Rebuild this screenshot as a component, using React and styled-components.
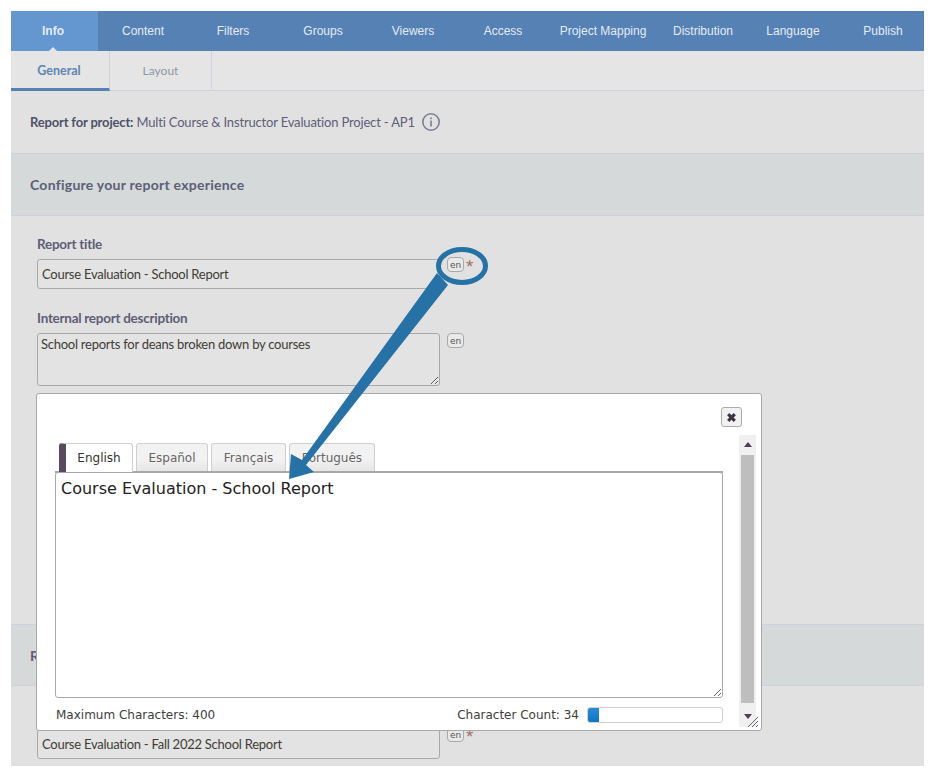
import styled, { createGlobalStyle } from 'styled-components';

const navItems = [
   { label: 'Info', width: 87 },
   { label: 'Content', width: 90 },
   { label: 'Filters', width: 90 },
   { label: 'Groups', width: 90 },
   { label: 'Viewers', width: 90 },
   { label: 'Access', width: 90 },
   { label: 'Project Mapping', width: 110 },
   { label: 'Distribution', width: 90 },
   { label: 'Language', width: 90 },
   { label: 'Publish', width: 90 },
];
const languages = [
   { id: 'en', label: 'English', width: 74 },
   { id: 'es', label: 'Español', width: 72 },
   { id: 'fr', label: 'Français', width: 75 },
   { id: 'pt', label: 'Português', width: 86 },
];

const GlobalStyle = createGlobalStyle`
   * {
      box-sizing: border-box;
   }
   body {
      margin: 0;
      background: #fff;
      font-family: 'Lato', 'Liberation Sans', sans-serif;
   }
`;

const Page = styled.div`
   position: relative;
   width: 913px;
   height: 755px;
   margin: 11px 0 0 11px;
   background: #e1e1e1;
   overflow: hidden;
`;

const NavBar = styled.nav`
   display: flex;
   height: 40px;
   background: #5681b4;
`;

const NavItem = styled.div`
   position: relative;
   flex: 0 0 ${(props) => props.$width}px;
   padding-right: ${(props) => (props.$active ? '3px' : '0')};
   display: flex;
   align-items: center;
   justify-content: center;
   background: ${(props) => (props.$active ? '#6496d0' : 'transparent')};
   color: #e3ebf4;
   font-family: 'Liberation Sans', Arial, sans-serif;
   font-size: 12px;
   font-weight: ${(props) => (props.$active ? 700 : 400)};

   &::after {
      content: '';
      display: ${(props) => (props.$active ? 'block' : 'none')};
      position: absolute;
      left: 38px;
      bottom: 0;
      border: 4px solid transparent;
      border-top: 0;
      border-bottom-color: #e5e5e5;
   }
`;

const SubTabs = styled.div`
   display: flex;
   height: 40px;
   background: #e5e5e5;
   border-bottom: 1px solid #cdd2de;
`;

const SubTab = styled.div`
   width: ${(props) => props.$width}px;
   display: flex;
   align-items: center;
   justify-content: center;
   border-right: 1px solid #cdd2de;
   border-bottom: 3px solid ${(props) => (props.$active ? '#5681b4' : 'transparent')};
   margin-bottom: -1px;
   padding: 2px ${(props) => (props.$active ? '2px' : '0')} 0 0;
   color: ${(props) => (props.$active ? '#5d84b2' : '#8f97a5')};
   font-size: ${(props) => (props.$active ? '12.5px' : '12px')};
   font-weight: ${(props) => (props.$active ? 700 : 400)};
`;

const ProjectRow = styled.div`
   height: 62px;
   padding: 0 19px;
   display: flex;
   align-items: center;
   gap: 6px;
   font-size: 13px;
   letter-spacing: -0.17px;
   color: #5e5d77;

   strong {
      color: #4d5268;
      font-weight: 700;
   }
`;

const InfoIcon = styled.svg`
   width: 20px;
   height: 20px;
   flex: none;
`;

const SectionBar = styled.div`
   height: ${(props) => props.$height}px;
   padding: 0 19px;
   display: flex;
   align-items: center;
   background: #d5d9da;
   border-top: 1px solid #ccd1da;
   border-bottom: 1px solid #ccd1da;
   color: #5a5f77;
   font-size: 14px;
   font-weight: 700;
   letter-spacing: 0.25px;
`;

const FormArea = styled.div`
   padding: ${(props) => props.$top}px 26px 0;
   height: ${(props) => props.$height}px;
`;

const FieldLabel = styled.label`
   display: block;
   margin-bottom: 7px;
   color: #5e5d77;
   font-size: 13.5px;
   line-height: 16px;
   font-weight: 700;
   letter-spacing: -0.27px;
`;

const Field = styled.div`
   display: flex;
   align-items: flex-start;
   gap: 7px;
   margin-bottom: ${(props) => props.$gap || 0}px;
`;

const TextInput = styled.input`
   width: 403px;
   height: 30px;
   padding: 0 4px;
   border: 1px solid #a9a9a9;
   border-radius: 3px;
   background: #e3e3e3;
   color: #403c35;
   font-family: 'Lato', sans-serif;
   font-size: 13px;
   letter-spacing: -0.25px;
   outline: none;
`;

const TextArea = styled.textarea`
   display: block;
   width: 403px;
   height: 53px;
   padding: 2px 3px;
   border: 1px solid #a9a9a9;
   border-radius: 3px;
   background: #e3e3e3;
   color: #403c35;
   font-family: 'Lato', sans-serif;
   font-size: 13px;
   line-height: 16px;
   letter-spacing: -0.25px;
   outline: none;
`;

const LangBadge = styled.span`
   margin-top: ${(props) => (props.$raised ? '-2px' : '0')};
   width: 17px;
   height: 15px;
   display: flex;
   align-items: center;
   justify-content: center;
   border: 1px solid #a9a9a9;
   border-radius: 4px;
   background: #e9e9e9;
   color: #555;
   font-family: 'DejaVu Sans', sans-serif;
   font-size: 9px;
`;

const Required = styled.span`
   margin: -2px 0 0 -5px;
   color: #a3705f;
   font-family: 'Liberation Sans', sans-serif;
   font-size: 19px;
   line-height: 20px;
`;

const Modal = styled.div`
   position: absolute;
   left: 25px;
   top: 382px;
   width: 726px;
   height: 338px;
   display: flex;
   background: #fff;
   border: 1px solid #a9a9a9;
   border-radius: 3px;
   font-family: 'DejaVu Sans', Verdana, sans-serif;
`;

const ModalMain = styled.div`
   flex: 0 0 702px;
   padding: 13px 0 0 18px;
   display: flex;
   flex-direction: column;
`;

const CloseRow = styled.div`
   display: flex;
   justify-content: flex-end;
   height: 36px;
   margin-right: -3px;
`;

const CloseButton = styled.button`
   width: 21px;
   height: 20px;
   padding: 0;
   display: flex;
   align-items: center;
   justify-content: center;
   background: #f1f1f1;
   border: 1px solid #ababab;
   border-radius: 3px;
`;

const LangTabs = styled.div`
   display: flex;
   gap: 3px;
   height: 30px;
   padding-left: 4px;
   border-bottom: 2px solid #a9a9a9;
   width: 668px;
`;

const LangTab = styled.div`
   width: ${(props) => props.$width}px;
   height: ${(props) => (props.$active ? '30px' : '28px')};
   display: flex;
   align-items: center;
   justify-content: center;
   padding-bottom: ${(props) => (props.$active ? '2px' : '0')};
   border: 1px solid #cfcfcf;
   border-bottom: 0;
   border-left: ${(props) => (props.$active ? '7px solid #574b5d' : '1px solid #cfcfcf')};
   border-radius: 3px 3px 0 0;
   background: ${(props) => (props.$active ? '#fff' : 'linear-gradient(#f2f2f2, #f2f2f2 55%, #e6e6e6)')};
   color: ${(props) => (props.$active ? '#333' : '#666')};
   font-size: 12px;
`;

const EditorArea = styled.textarea`
   display: block;
   width: 668px;
   height: 226px;
   margin-top: -1px;
   padding: 6px 5px;
   border: 1px solid #a9a9a9;
   border-radius: 3px;
   background: #fff;
   color: #222;
   font-family: 'DejaVu Sans', Verdana, sans-serif;
   font-size: 16px;
   outline: none;
`;

const ModalFooter = styled.div`
   width: 668px;
   margin-top: 9px;
   padding-left: 1px;
   display: flex;
   align-items: center;
   justify-content: space-between;
   color: #3d3d3d;
   font-size: 12px;
`;

const CountGroup = styled.div`
   display: flex;
   align-items: center;
   gap: 8px;
`;

const Progress = styled.div`
   width: 136px;
   height: 16px;
   border: 1px solid #d0d0d0;
   border-radius: 3px;
   overflow: hidden;
   background: #fff;
`;

const ProgressFill = styled.div`
   height: 100%;
   background: linear-gradient(#2a8cd8, #0f74c4);
`;

const ScrollRail = styled.div`
   flex: 0 0 17px;
   margin: 41px 0 3px;
   display: flex;
   flex-direction: column;
   background: #f0f0f0;
`;

const ScrollArrow = styled.div`
   flex: 0 0 ${(props) => (props.$up ? '18px' : '24px')};
   padding-top: ${(props) => (props.$up ? '0' : '3px')};
   margin-bottom: ${(props) => (props.$up ? '2px' : '0')};
   display: flex;
   align-items: center;
   justify-content: center;

   &::before {
      content: '';
      border: 4px solid transparent;
      ${(props) => (props.$up ? 'border-top: 0; border-bottom: 5px solid #4a4050;' : 'border-bottom: 0; border-top: 5px solid #4a4050;')}
   }
`;

const ScrollThumb = styled.div`
   flex: 1;
   margin: 0 2px;
   background: #bebebe;
`;

const ResizeGrip = styled.svg`
   position: absolute;
   right: 3px;
   bottom: 3px;
   width: 11px;
   height: 11px;
`;

const Annotation = styled.svg`
   position: absolute;
   left: -11px;
   top: -11px;
   width: 936px;
   height: 778px;
   pointer-events: none;
`;

const App = () => {
   const count = 34;
   const max = 400;

   return (
      <>
         <GlobalStyle />
         <Page>
            <NavBar>
               {navItems.map((item, i) => (
                  <NavItem key={item.label} $width={item.width} $active={i === 0}>
                     {item.label}
                  </NavItem>
               ))}
            </NavBar>
            <SubTabs>
               <SubTab $width={99} $active>
                  General
               </SubTab>
               <SubTab $width={102}>Layout</SubTab>
            </SubTabs>
            <ProjectRow>
               <span>
                  <strong>Report for project:</strong> Multi Course &amp; Instructor Evaluation Project - AP1
               </span>
               <InfoIcon viewBox='0 0 20 20'>
                  <circle cx='10' cy='10' r='8.2' fill='none' stroke='#7a7f90' strokeWidth='1.6' />
                  <rect x='9.2' y='8.5' width='1.6' height='6' fill='#7a7f90' />
                  <rect x='9.2' y='5.5' width='1.6' height='1.7' fill='#7a7f90' />
               </InfoIcon>
            </ProjectRow>
            <SectionBar $height={63}>Configure your report experience</SectionBar>
            <FormArea $top={20} $height={408}>
               <FieldLabel>Report title</FieldLabel>
               <Field $gap={21}>
                  <TextInput readOnly value='Course Evaluation - School Report' />
                  <LangBadge $raised>en</LangBadge>
                  <Required>*</Required>
               </Field>
               <FieldLabel>Internal report description</FieldLabel>
               <Field>
                  <TextArea readOnly value='School reports for deans broken down by courses' />
                  <LangBadge>en</LangBadge>
               </Field>
            </FormArea>
            <SectionBar $height={62}>Report details</SectionBar>
            <FormArea $top={43} $height={69}>
               <Field>
                  <TextInput readOnly value='Course Evaluation - Fall 2022 School Report' />
                  <LangBadge $raised>en</LangBadge>
                  <Required>*</Required>
               </Field>
            </FormArea>

            <Modal>
               <ModalMain>
                  <CloseRow>
                     <CloseButton aria-label='Close'>
                        <svg width='11' height='11' viewBox='0 0 10 10'>
                           <path d='M2 2l6 6M8 2l-6 6' stroke='#3b3340' strokeWidth='2.8' fill='none' />
                        </svg>
                     </CloseButton>
                  </CloseRow>
                  <LangTabs>
                     {languages.map((lang, i) => (
                        <LangTab key={lang.id} $width={lang.width} $active={i === 0}>
                           {lang.label}
                        </LangTab>
                     ))}
                  </LangTabs>
                  <EditorArea readOnly value='Course Evaluation - School Report' />
                  <ModalFooter>
                     <span>Maximum Characters: {max}</span>
                     <CountGroup>
                        <span>Character Count: {count}</span>
                        <Progress>
                           <ProgressFill style={{ width: `${(count / max) * 100}%` }} />
                        </Progress>
                     </CountGroup>
                  </ModalFooter>
               </ModalMain>
               <ScrollRail>
                  <ScrollArrow $up />
                  <ScrollThumb />
                  <ScrollArrow />
               </ScrollRail>
               <ResizeGrip viewBox='0 0 11 11'>
                  <path d='M1 11L11 1M5 11l6-6M9 11l2-2' stroke='#6e6674' strokeWidth='1' fill='none' />
               </ResizeGrip>
            </Modal>

            <Annotation viewBox='0 0 936 778'>
               <ellipse cx='462' cy='266' rx='23.5' ry='16.5' fill='none' stroke='#2672a6' strokeWidth='5' />
               <path d='M437 273L302 460L291 454L289 479L314 472L306 465L448 285Z' fill='#2672a6' />
            </Annotation>
         </Page>
      </>
   );
};

export default App;
